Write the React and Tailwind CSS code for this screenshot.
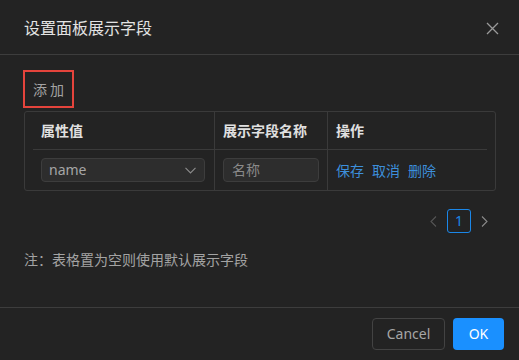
import React from "react";

const font = { fontFamily: '"Noto Sans", "Noto Sans CJK SC", sans-serif' };

export default function App() {
  return (
    <div
      className="w-[519px] h-[360px] bg-[#232323] flex flex-col overflow-hidden"
      style={font}
    >
      {/* header */}
      <div className="h-[55px] shrink-0 border-b border-[#3d3d3d] flex items-center justify-between pl-6 pr-[20px]">
        <div className="text-[16px] leading-none text-[#e3e3e3] pt-[2px]">设置面板展示字段</div>
        <svg width="13" height="13" viewBox="0 0 13 13" className="mt-[2px]">
          <path d="M1 1 L12 12 M12 1 L1 12" stroke="#9a9a9a" strokeWidth="1.3" fill="none" />
        </svg>
      </div>

      {/* body */}
      <div className="flex-1 flex flex-col px-6 pt-[15px]">
        <div className="w-[51px] h-[38px] border-2 border-[#e5443c] -ml-[1px] flex items-center justify-center">
          <span className="text-[14px] text-[#a3a3a3] tracking-[3px] pl-[3px]">添加</span>
        </div>

        <div className="mt-[3px] w-[472px] h-[80px] border border-[#3a3a3a] rounded-[3px] px-2 flex flex-col">
          {/* header row */}
          <div className="h-[38px] border-b border-[#3a3a3a] flex text-[14px] font-bold text-[#e0e0e0]">
            <div className="w-[182px] border-r border-[#3a3a3a] pl-2 flex items-center">属性值</div>
            <div className="w-[113px] border-r border-[#3a3a3a] pl-2 flex items-center">展示字段名称</div>
            <div className="w-[159px] pl-2 flex items-center">操作</div>
          </div>
          {/* body row */}
          <div className="flex-1 flex">
            <div className="w-[182px] border-r border-[#3a3a3a] pl-2 pr-[9px] flex items-center">
              <div className="w-full h-[24px] rounded-[4px] border border-[#3d3d3d] bg-[#2d2d2d] flex items-center justify-between pl-[7px] pr-[8px]">
                <span className="text-[14px] text-[#a6a6a6] leading-none">name</span>
                <svg width="11" height="7" viewBox="0 0 11 7">
                  <path d="M0.5 0.8 L5.5 6 L10.5 0.8" stroke="#8c8c8c" strokeWidth="1.1" fill="none" />
                </svg>
              </div>
            </div>
            <div className="w-[113px] border-r border-[#3a3a3a] pl-2 flex items-center">
              <div className="w-[96px] h-[24px] rounded-[4px] border border-[#3d3d3d] bg-[#2d2d2d] flex items-center pl-[8px]">
                <span className="text-[14px] text-[#8a8a8a] leading-none">名称</span>
              </div>
            </div>
            <div className="w-[159px] pl-2 flex items-center gap-[8px] text-[14px] text-[#3d8fdb]">
              <span>保存</span>
              <span>取消</span>
              <span>删除</span>
            </div>
          </div>
        </div>

        {/* pagination */}
        <div className="mt-[18px] flex items-center justify-end gap-[10px] pr-[7px]">
          <svg width="7" height="11" viewBox="0 0 7 11">
            <path d="M6 0.5 L1 5.5 L6 10.5" stroke="#555555" strokeWidth="1.1" fill="none" />
          </svg>
          <div className="w-[24px] h-[24px] rounded-[3px] border border-[#1b87e8] flex items-center justify-center text-[14px] text-[#1b87e8] leading-none">
            1
          </div>
          <svg width="7" height="11" viewBox="0 0 7 11">
            <path d="M1 0.5 L6 5.5 L1 10.5" stroke="#8a8a8a" strokeWidth="1.1" fill="none" />
          </svg>
        </div>

        <div className="mt-[20px] text-[14px] text-[#a3a3a3] leading-none">注：表格置为空则使用默认展示字段</div>
      </div>

      {/* footer */}
      <div className="h-[53px] shrink-0 border-t border-[#3d3d3d] flex items-center justify-end gap-2 pr-[15px] pb-[1px]">
        <div className="w-[73px] h-[32px] rounded-[4px] border border-[#434343] flex items-center justify-center text-[14px] text-[#a6a6a6]">
          Cancel
        </div>
        <div className="w-[51px] h-[32px] rounded-[4px] bg-[#1a90ff] flex items-center justify-center text-[14px] text-white">
          OK
        </div>
      </div>
    </div>
  );
}
